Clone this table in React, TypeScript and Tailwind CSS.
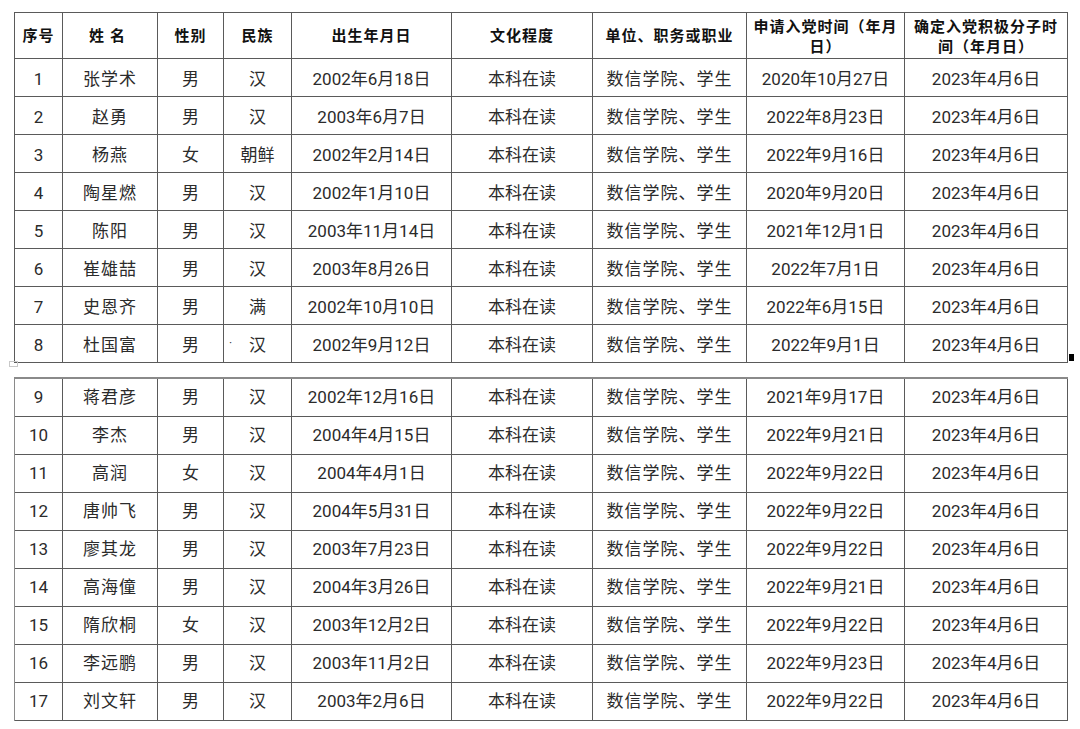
const cols = "grid-cols-[48px_95px_66px_68px_160px_141px_154px_158px_163px]"

interface Member {
  no: number
  name: string
  sex: string
  nation: string
  birth: string
  applied: string
}

const firstPage: Member[] = [
  { no: 1, name: "张学术", sex: "男", nation: "汉", birth: "2002年6月18日", applied: "2020年10月27日" },
  { no: 2, name: "赵勇", sex: "男", nation: "汉", birth: "2003年6月7日", applied: "2022年8月23日" },
  { no: 3, name: "杨燕", sex: "女", nation: "朝鲜", birth: "2002年2月14日", applied: "2022年9月16日" },
  { no: 4, name: "陶星燃", sex: "男", nation: "汉", birth: "2002年1月10日", applied: "2020年9月20日" },
  { no: 5, name: "陈阳", sex: "男", nation: "汉", birth: "2003年11月14日", applied: "2021年12月1日" },
  { no: 6, name: "崔雄喆", sex: "男", nation: "汉", birth: "2003年8月26日", applied: "2022年7月1日" },
  { no: 7, name: "史恩齐", sex: "男", nation: "满", birth: "2002年10月10日", applied: "2022年6月15日" },
  { no: 8, name: "杜国富", sex: "男", nation: "汉", birth: "2002年9月12日", applied: "2022年9月1日" },
]

const secondPage: Member[] = [
  { no: 9, name: "蒋君彦", sex: "男", nation: "汉", birth: "2002年12月16日", applied: "2021年9月17日" },
  { no: 10, name: "李杰", sex: "男", nation: "汉", birth: "2004年4月15日", applied: "2022年9月21日" },
  { no: 11, name: "高润", sex: "女", nation: "汉", birth: "2004年4月1日", applied: "2022年9月22日" },
  { no: 12, name: "唐帅飞", sex: "男", nation: "汉", birth: "2004年5月31日", applied: "2022年9月22日" },
  { no: 13, name: "廖其龙", sex: "男", nation: "汉", birth: "2003年7月23日", applied: "2022年9月22日" },
  { no: 14, name: "高海僮", sex: "男", nation: "汉", birth: "2004年3月26日", applied: "2022年9月21日" },
  { no: 15, name: "隋欣桐", sex: "女", nation: "汉", birth: "2003年12月2日", applied: "2022年9月22日" },
  { no: 16, name: "李远鹏", sex: "男", nation: "汉", birth: "2003年11月2日", applied: "2022年9月23日" },
  { no: 17, name: "刘文轩", sex: "男", nation: "汉", birth: "2003年2月6日", applied: "2022年9月22日" },
]

function Cell({ children, className }: { children?: React.ReactNode; className?: string }) {
  return (
    <div
      className={
        "flex items-center justify-center border-r border-b border-[#5a5a5a] text-center " +
        (className ?? "")
      }
    >
      {children}
    </div>
  )
}

function Header() {
  return (
    <div className={"grid h-[46px] text-[15px] font-bold leading-[20px] tracking-[1px] text-[#111] " + cols}>
      <Cell>序号</Cell>
      <Cell className="tracking-[6px]">姓名</Cell>
      <Cell>性别</Cell>
      <Cell>民族</Cell>
      <Cell>出生年月日</Cell>
      <Cell>文化程度</Cell>
      <Cell>单位、职务或职业</Cell>
      <Cell className="flex-col pt-[2px]">
        <span>申请入党时间（年月</span>
        <span>日）</span>
      </Cell>
      <Cell className="flex-col pt-[2px]">
        <span>确定入党积极分子时</span>
        <span>间（年月日）</span>
      </Cell>
    </div>
  )
}

function Row({ m, dot, lower }: { m: Member; dot?: boolean; lower?: boolean }) {
  return (
    <div
      className={
        "grid h-[38px] text-[17px] text-[#2b2b2b] " +
        (lower ? "[&>div]:pt-[4px] " : "[&>div]:pt-[1px] ") +
        cols
      }
    >
      <Cell>{m.no}</Cell>
      <Cell className="tracking-[1px]">{m.name}</Cell>
      <Cell>{m.sex}</Cell>
      <Cell className="relative">
        {dot ? <span className="absolute left-[5px] top-[9px] text-[12px] text-[#444]">·</span> : null}
        {m.nation}
      </Cell>
      <Cell>{m.birth}</Cell>
      <Cell>本科在读</Cell>
      <Cell className="tracking-[1px]">数信学院、学生</Cell>
      <Cell>{m.applied}</Cell>
      <Cell>2023年4月6日</Cell>
    </div>
  )
}

export default function App() {
  return (
    <div className="min-h-[729px] w-[1080px] bg-white pl-[14px] pt-[12px] font-['Roboto','Noto_Sans_CJK_SC',sans-serif]">
      <div className="relative w-[1054px] border-t border-l border-[#5a5a5a]">
        <Header />
        {firstPage.map((m) => (
          <Row key={m.no} m={m} dot={m.no === 8} lower />
        ))}
        <span className="absolute right-[-6px] bottom-[2px] h-[7px] w-[5px] bg-black" />
        <span className="absolute left-[-6px] bottom-[-4px] h-[6px] w-[9px] border border-[#c8c8c8]" />
      </div>
      <div className="mt-[14px] w-[1054px] border-t-2 border-l border-[#8a8a8a]">
        {secondPage.map((m) => (
          <Row key={m.no} m={m} />
        ))}
      </div>
    </div>
  )
}
